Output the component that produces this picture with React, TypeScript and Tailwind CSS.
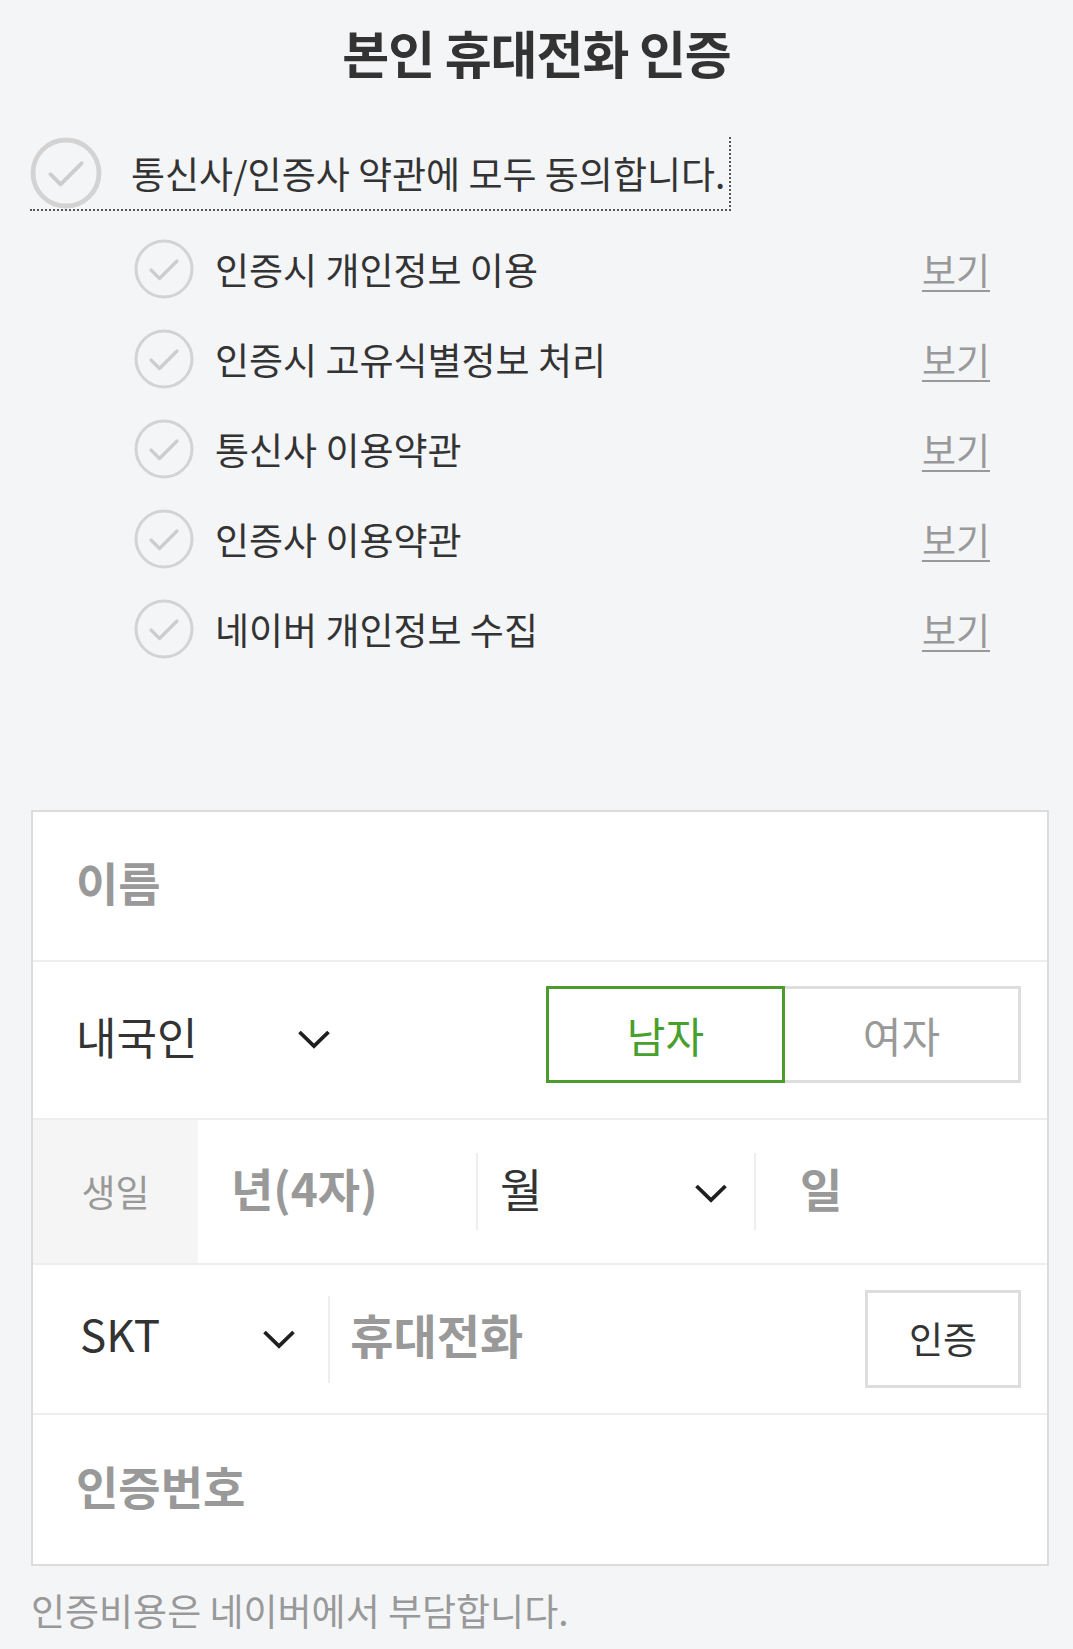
import React from "react";

const CheckCircle = ({ size, stroke = 3 }: { size: number; stroke?: number }) => (
  <svg width={size} height={size} viewBox="0 0 60 60" fill="none" className="shrink-0">
    <circle cx="30" cy="30" r={30 - stroke / 2 - 0.5} stroke="#d3d3d3" strokeWidth={stroke} />
    <path
      d="M17 31l8.5 8.5L43 22"
      stroke="#cdcdcd"
      strokeWidth="3.2"
      strokeLinecap="round"
      strokeLinejoin="round"
    />
  </svg>
);

const Chevron = () => (
  <svg width="34" height="20" viewBox="0 0 34 20" fill="none" className="shrink-0">
    <path d="M2.5 3L17 17L31.5 3" stroke="#1f1f1f" strokeWidth="3.8" strokeLinejoin="miter" />
  </svg>
);

export default function App() {
  const terms = [
    "인증시 개인정보 이용",
    "인증시 고유식별정보 처리",
    "통신사 이용약관",
    "인증사 이용약관",
    "네이버 개인정보 수집",
  ];

  return (
    <div className="min-h-[1649px] w-full bg-[#f4f5f7] font-['Noto_Sans_CJK_KR',sans-serif] text-[#333]">
      {/* title */}
      <h1 className="pt-[23px] text-center text-[51px] font-bold leading-[58px] tracking-[-1px] text-[#333]">
        본인 휴대전화 인증
      </h1>

      {/* agree all */}
      <div className="mt-[56px] pl-[30px]">
        <label className="inline-flex h-[74px] items-center gap-[29px] border-b-2 border-r-2 border-dotted border-[#555] pr-[4px]">
          <CheckCircle size={72} stroke={4} />
          <span className="text-[37px] leading-none">통신사/인증사 약관에 모두 동의합니다.</span>
        </label>
      </div>

      {/* terms */}
      <ul className="mt-[10px]">
        {terms.map((t) => (
          <li key={t} className="flex h-[90px] items-center pl-[134px] pr-[83px]">
            <CheckCircle size={60} />
            <span className="ml-[21px] flex-1 text-[37px] leading-none">{t}</span>
            <a className="text-[37px] leading-none text-[#999] underline decoration-2 underline-offset-[5px]">
              보기
            </a>
          </li>
        ))}
      </ul>

      {/* form */}
      <div className="ml-[31px] mr-[24px] mt-[136px] border-2 border-[#dcdcdc] bg-white">
        <div className="flex h-[150px] items-center border-b-2 border-[#eee] pb-[10px] pl-[43px]">
          <span className="text-[46px] font-bold text-[#999]">이름</span>
        </div>

        <div className="flex h-[158px] items-center border-b-2 border-[#eee] pb-[8px] pl-[43px] pr-[26px]">
          <span className="text-[44px] text-[#333]">내국인</span>
          <span className="ml-[100px] mt-[6px]">
            <Chevron />
          </span>
          <div className="ml-auto mb-[4px] flex h-[97px]">
            <button className="w-[239px] border-[3px] border-[#4a9d2c] text-[42px] text-[#48a02c]">
              남자
            </button>
            <button className="w-[236px] border-[3px] border-l-0 border-[#ddd] text-[42px] text-[#999]">
              여자
            </button>
          </div>
        </div>

        <div className="flex h-[145px] border-b-2 border-[#eee]">
          <div className="flex w-[165px] items-center justify-center bg-[#f5f5f5] text-[37px] text-[#999]">
            생일
          </div>
          <div className="flex w-[278px] items-center pb-[8px] pl-[33px]">
            <span className="text-[46px] font-bold text-[#999]">년(4자)</span>
          </div>
          <div className="h-[77px] w-[2px] self-center bg-[#eee]" />
          <div className="flex w-[276px] items-center pb-[8px] pl-[22px] pr-[26px]">
            <span className="text-[46px] text-[#333]">월</span>
            <span className="ml-auto mt-[10px]">
              <Chevron />
            </span>
          </div>
          <div className="h-[77px] w-[2px] self-center bg-[#eee]" />
          <div className="flex flex-1 items-center pb-[8px] pl-[44px]">
            <span className="text-[46px] font-bold text-[#999]">일</span>
          </div>
        </div>

        <div className="flex h-[150px] items-center border-b-2 border-[#eee] pl-[47px] pr-[26px]">
          <span className="mb-[12px] text-[44px] text-[#333]">SKT</span>
          <span className="ml-[102px]">
            <Chevron />
          </span>
          <div className="ml-[32px] h-[87px] w-[2px] bg-[#eee]" />
          <span className="mb-[10px] ml-[20px] text-[47px] font-bold text-[#999]">휴대전화</span>
          <button className="ml-auto h-[98px] w-[156px] border-[3px] border-[#ddd] text-[37px] text-[#333]">
            인증
          </button>
        </div>

        <div className="flex h-[149px] items-center pb-[8px] pl-[43px]">
          <span className="text-[46px] font-bold text-[#999]">인증번호</span>
        </div>
      </div>

      <p className="mt-[20px] pl-[31px] text-[37px] leading-[48px] text-[#999]">
        인증비용은 네이버에서 부담합니다.
      </p>
    </div>
  );
}
